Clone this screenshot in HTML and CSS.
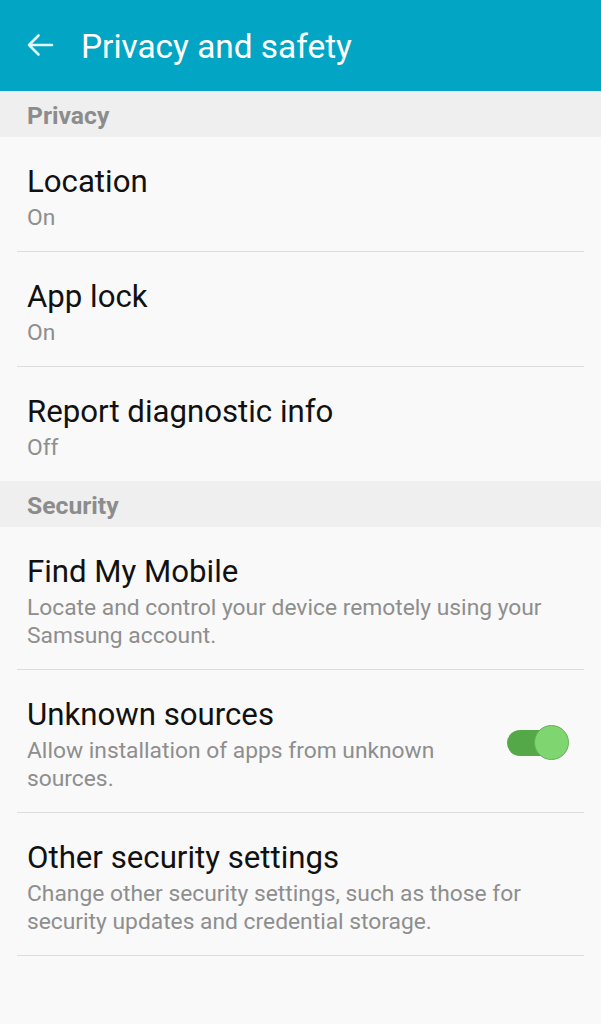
FILE: index.html
```html
<!DOCTYPE html>
<html lang="en">
<head>
<meta charset="utf-8">
<title>Privacy and safety</title>
<link rel="stylesheet" href="styles.css">
</head>
<body>
<header class="appbar">
  <svg class="back" width="28" height="24" viewBox="0 0 28 24" aria-hidden="true">
    <path d="M26 12H3 M12.5 2.5 L3 12 L12.5 21.5" fill="none" stroke="#dff6fa" stroke-width="2.6" stroke-linecap="round" stroke-linejoin="round"/>
  </svg>
  <h1 class="title">Privacy and safety</h1>
</header>
<main class="list">
  <div class="section">Privacy</div>
  <div class="item">
    <div class="item-text">
      <div class="item-title">Location</div>
      <div class="item-sub">On</div>
    </div>
  </div>
  <div class="item">
    <div class="item-text">
      <div class="item-title">App lock</div>
      <div class="item-sub">On</div>
    </div>
  </div>
  <div class="item last">
    <div class="item-text">
      <div class="item-title">Report diagnostic info</div>
      <div class="item-sub">Off</div>
    </div>
  </div>
  <div class="section">Security</div>
  <div class="item">
    <div class="item-text">
      <div class="item-title">Find My Mobile</div>
      <div class="item-sub">Locate and control your device remotely using your Samsung account.</div>
    </div>
  </div>
  <div class="item">
    <div class="item-text narrow">
      <div class="item-title">Unknown sources</div>
      <div class="item-sub">Allow installation of apps from unknown sources.</div>
    </div>
    <div class="switch on"><span class="thumb"></span></div>
  </div>
  <div class="item">
    <div class="item-text">
      <div class="item-title">Other security settings</div>
      <div class="item-sub">Change other security settings, such as those for security updates and credential storage.</div>
    </div>
  </div>
</main>
</body>
</html>
```
FILE: styles.css
```css
html, body {
  margin: 0;
  padding: 0;
}
body {
  width: 601px;
  min-height: 1024px;
  background: #f9f9f9;
  font-family: Roboto, "Noto Sans", "Liberation Sans", sans-serif;
}
.appbar {
  height: 91px;
  background: #03a5c5;
  display: flex;
  align-items: center;
  padding-left: 26px;
  box-sizing: border-box;
}
.back {
  display: block;
  margin-right: 27px;
  margin-top: -1px;
}
.title {
  margin: 0;
  font-size: 33.4px;
  font-weight: 400;
  color: #ffffff;
  margin-top: 1px;
}
.section {
  background: #efefef;
  height: 46px;
  line-height: 46px;
  padding-left: 27px;
  font-size: 24.7px;
  font-weight: 700;
  color: #8c8c8c;
  box-sizing: border-box;
  padding-top: 2px;
}
.list {
  display: flex;
  flex-direction: column;
}
.item {
  margin: 0 17px;
  padding: 27px 10px 19px;
  border-bottom: 1px solid #dcdcdc;
  display: flex;
  align-items: center;
}
.item.last {
  border-bottom: none;
}
.item-text {
  flex: 1;
  min-width: 0;
}
.item-text.narrow {
  flex: 0 0 440px;
  margin-right: auto;
}
.item-title {
  font-size: 31.2px;
  line-height: 36px;
  color: #111111;
  margin-bottom: 4px;
}
.item-sub {
  font-size: 22.8px;
  line-height: 28px;
  color: #8e8e8e;
}
.switch {
  position: relative;
  width: 48px;
  height: 26px;
  border-radius: 13px;
  background: #54a848;
  margin-right: 19px;
  margin-top: -4px;
}
.thumb {
  position: absolute;
  right: -14px;
  top: -5px;
  width: 35px;
  height: 35px;
  border-radius: 50%;
  background: #7fd56f;
  border: 1px solid #62b456;
  box-sizing: border-box;
}
```
